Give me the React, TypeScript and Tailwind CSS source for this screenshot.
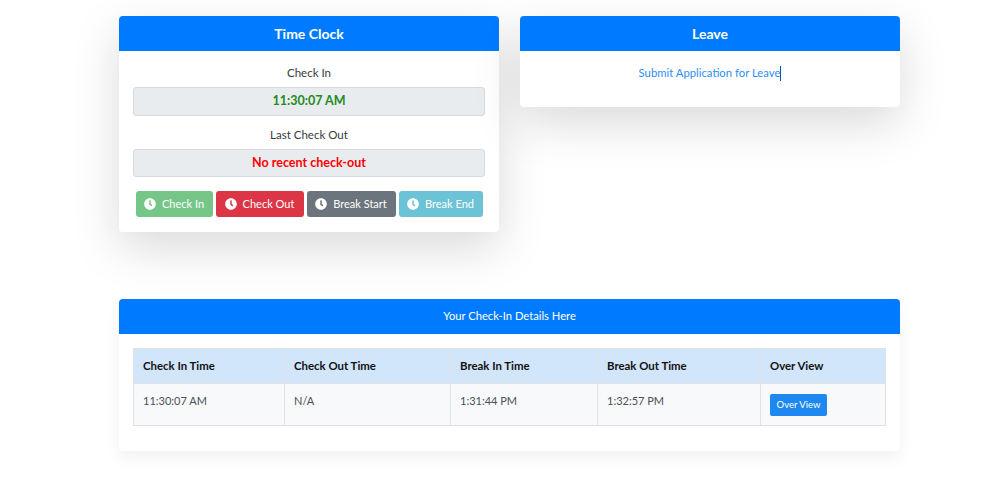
import React from 'react';
import { FaClock } from 'react-icons/fa';

const ACTIONS = [
  { label: 'Check In', cls: 'w-[77px] bg-[#75c687]' },
  { label: 'Check Out', cls: 'w-[88px] bg-[#dc3545]' },
  { label: 'Break Start', cls: 'w-[89px] bg-[#6c757d]' },
  { label: 'Break End', cls: 'w-[84px] bg-[#6cc3d5]' },
];

const HEADERS = ['Check In Time', 'Check Out Time', 'Break In Time', 'Break Out Time', 'Over View'];
const WIDTHS = ['w-[151px]', 'w-[166px]', 'w-[147px]', 'w-[163px]', 'w-[125px]'];
const ROW = ['11:30:07 AM', 'N/A', '1:31:44 PM', '1:32:57 PM'];

const App: React.FC = () => {
  return (
    <div className="min-h-[491px] bg-white pl-[119px] pt-4 font-['Lato',sans-serif] text-[11.5px] text-[#343a40]">
      <div className="flex w-[781px] items-start gap-[21px]">
        {/* Time clock */}
        <div className="h-[216px] w-[380px] rounded-[4px] bg-white shadow-[0_16px_48px_rgba(0,0,0,0.15)]">
          <div className="flex h-[35px] items-center justify-center rounded-t-[4px] bg-[#007bff] text-[14px] font-bold text-white">
            Time Clock
          </div>
          <div className="flex flex-col items-center px-[14px] pt-[14px]">
            <div className="flex h-4 items-center">Check In</div>
            <div className="mt-[6px] flex h-[29px] w-full items-center justify-center rounded-[3px] border border-[#d5dadf] bg-[#e9ecef] text-[12.5px] font-bold text-[#228b22]">
              11:30:07 AM
            </div>
            <div className="mt-[11px] flex h-4 items-center">Last Check Out</div>
            <div className="mt-[6px] flex h-[28px] w-full items-center justify-center rounded-[3px] border border-[#d5dadf] bg-[#e9ecef] text-[12.5px] font-bold text-[#ff0000]">
              No recent check-out
            </div>
            <div className="mt-[14px] flex gap-[3px]">
              {ACTIONS.map(a => (
                <button
                  key={a.label}
                  className={`flex h-[26px] items-center justify-center gap-[6px] rounded-[3px] text-[11px] text-white ${a.cls}`}
                >
                  <FaClock className="h-[12px] w-[12px]" />
                  {a.label}
                </button>
              ))}
            </div>
          </div>
        </div>

        {/* Leave */}
        <div className="h-[91px] w-[380px] rounded-[4px] bg-white shadow-[0_16px_48px_rgba(0,0,0,0.15)]">
          <div className="flex h-[35px] items-center justify-center rounded-t-[4px] bg-[#007bff] text-[14px] font-bold text-white">
            Leave
          </div>
          <div className="flex justify-center pt-[14px] text-[11.3px] text-[#2f8dfb]">
            <a className="flex h-4 items-center">
              Submit Application for Leave
              <span className="inline-block h-[15px] w-px bg-[#0056b3]" />
            </a>
          </div>
        </div>
      </div>

      {/* Check-in details */}
      <div className="mt-[67px] h-[152px] w-[781px] rounded-[4px] bg-white shadow-[0_8px_16px_rgba(0,0,0,0.05)]">
        <div className="flex h-[35px] items-center justify-center rounded-t-[4px] bg-[#007bff] pb-[1px] text-[11.2px] text-white">
          Your Check-In Details Here
        </div>
        <div className="px-[14px] pt-[14px]">
          <table className="w-[752px] table-fixed border-collapse text-left">
            <thead>
              <tr className="h-[35px] bg-[#d1e5fb] text-[#111111]">
                {HEADERS.map((h, i) => (
                  <th key={h} className={`border border-[#dee2e6] pb-[1px] pl-[9px] text-[11.4px] font-bold ${WIDTHS[i]}`}>
                    {h}
                  </th>
                ))}
              </tr>
            </thead>
            <tbody>
              <tr className="h-[42px] bg-[#f8f9fa]">
                {ROW.map(v => (
                  <td key={v} className="border border-[#dee2e6] pb-[7px] pl-[9px] text-[11px] text-[#495057]">
                    {v}
                  </td>
                ))}
                <td className="border border-[#dee2e6] pl-[9px]">
                  <button className="mt-[1px] flex h-[22px] w-[57px] items-center justify-center rounded-[2px] bg-[#1e88f0] text-[9.5px] text-white">
                    Over View
                  </button>
                </td>
              </tr>
            </tbody>
          </table>
        </div>
      </div>
    </div>
  );
};

export default App;
